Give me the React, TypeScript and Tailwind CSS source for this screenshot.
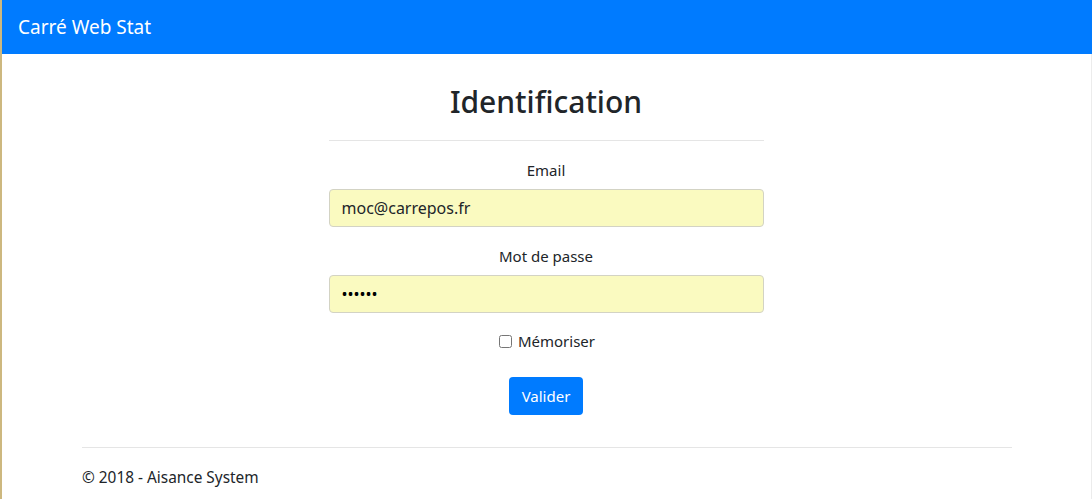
export default function App() {
  const font = { fontFamily: '"Noto Sans", "Open Sans", sans-serif' }
  return (
    <div className="relative h-[499px] overflow-hidden bg-white text-[#212529]" style={font}>
      {/* desktop edge strip */}
      <div className="absolute left-0 top-0 h-full w-[2px] bg-[#cdb87f]" />
      <div className="absolute right-0 top-[54px] bottom-0 w-px bg-[#ececec]" />

      {/* navbar */}
      <nav className="h-[54px] bg-[#007bff] flex items-center pl-[16px] ml-[2px]">
        <span className="text-white text-[19px] leading-none">Carré Web Stat</span>
      </nav>

      <div className="flex flex-col items-center">
        <div className="w-[435px] flex flex-col items-center">
          <h2 className="text-[30px] font-medium leading-[38px] mt-[29px]">Identification</h2>
          <hr className="w-full border-t border-[#e5e5e5] mt-[19px]" />

          <label className="text-[15px] leading-6 mt-[17px]">Email</label>
          <input
            className="mt-[7px] w-full h-[38px] rounded border border-[#d3d3c4] bg-[#fafac0] px-3 text-[16px] text-[#212529] outline-none"
            defaultValue="moc@carrepos.fr"
            style={font}
          />

          <label className="text-[15px] leading-6 mt-[17px]">Mot de passe</label>
          <input
            type="password"
            className="mt-[7px] w-full h-[38px] rounded border border-[#d3d3c4] bg-[#fafac0] px-3 text-[16px] text-black outline-none"
            defaultValue="123456"
          />

          <label className="flex items-center gap-[6px] mt-[16px] ml-[2px] text-[15px] leading-6">
            <input type="checkbox" className="w-[13px] h-[13px]" />
            Mémoriser
          </label>

          <button className="mt-[24px] h-[38px] px-[13px] rounded bg-[#007bff] text-white text-[15px]">
            Valider
          </button>
        </div>

        <div className="w-[930px] mt-[32px] ml-[2px]">
          <hr className="border-t border-[#e5e5e5]" />
          <p className="mt-[18px] text-[15.4px] leading-6">© 2018 - Aisance System</p>
        </div>
      </div>
    </div>
  )
}
